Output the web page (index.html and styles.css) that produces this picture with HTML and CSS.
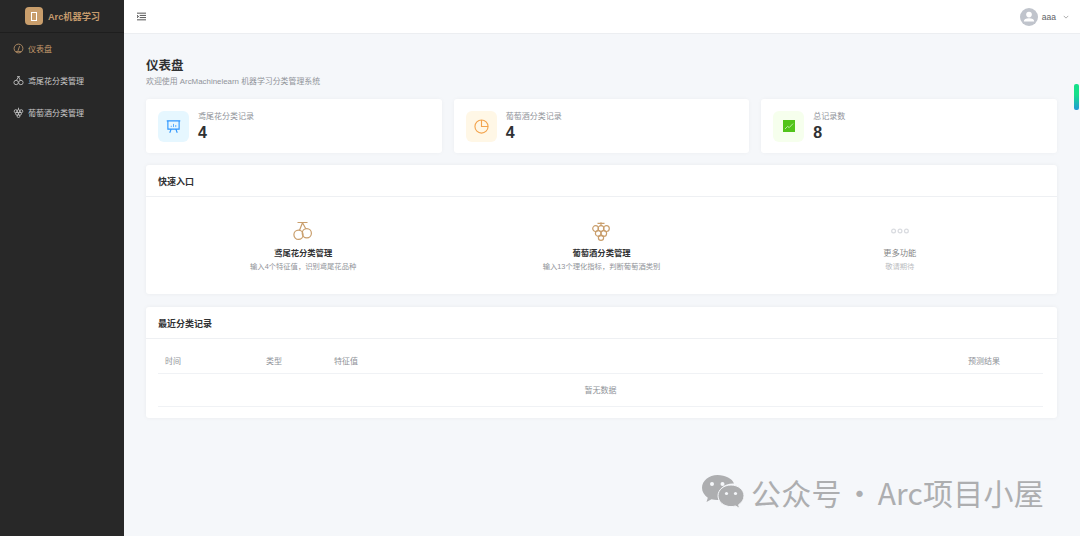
FILE: index.html
```html
<!DOCTYPE html>
<html lang="en">
<head>
    <meta charset="UTF-8">
    <meta name="viewport" content="width=device-width, initial-scale=1.0">
    <title>Arc机器学习</title>
    <link rel="stylesheet" href="styles.css">
</head>
<body>
    <aside class="sidebar">
        <div class="brand">
            <div class="brand-logo"><span class="brand-mark"></span></div>
            <span class="brand-name">Arc机器学习</span>
        </div>
        <nav class="menu">
            <div class="menu-item active">
                <svg class="menu-icon" viewBox="0 0 12 12"><circle cx="6" cy="6" r="4.8"/><path d="M5.4 8.6 7.2 3.4M3 9.400h6"/></svg>
                <span>仪表盘</span>
            </div>
            <div class="menu-item">
                <svg class="menu-icon" viewBox="0 0 12 12"><circle cx="3.4" cy="8.2" r="2.4"/><circle cx="8.6" cy="8.2" r="2.4"/><path d="M3.8 5.8 6 2 8 5.800M4.400 1.800h3.200"/></svg>
                <span>鸢尾花分类管理</span>
            </div>
            <div class="menu-item">
                <svg class="menu-icon" viewBox="0 0 12 12"><circle cx="3" cy="4.600" r="1.700"/><circle cx="6" cy="4.600" r="1.700"/><circle cx="9" cy="4.600" r="1.700"/><circle cx="4.500" cy="7.300" r="1.700"/><circle cx="7.500" cy="7.300" r="1.700"/><circle cx="6" cy="10" r="1.500"/><path d="M6 3V.8"/></svg>
                <span>葡萄酒分类管理</span>
            </div>
        </nav>
    </aside>

    <div class="right">
        <header class="topbar">
            <svg class="fold-icon" viewBox="0 0 10 9"><path d="M0 .8h10M3 3.300h7M3 5.700h7M0 8.200h10M0 3.200v2.600l1.800-1.300z"/></svg>
            <div class="user">
                <div class="avatar">
                    <svg viewBox="0 0 18 18"><circle cx="9" cy="6.600" r="2.800"/><path d="M3.800 13.600c0-2.400 2.200-3.400 5.200-3.400s5.200 1 5.200 3.400z"/></svg>
                </div>
                <span class="user-name">aaa</span>
                <svg class="caret" viewBox="0 0 8 5"><path d="M1 1l3 3 3-3"/></svg>
            </div>
        </header>

        <main class="content">
            <h1 class="page-title">仪表盘</h1>
            <p class="page-sub">欢迎使用 ArcMachinelearn 机器学习分类管理系统</p>

            <section class="stats">
                <div class="stat-card">
                    <div class="stat-icon blue">
                        <svg viewBox="0 0 16 16"><path d="M.8 2h14.400M2 2v8.800h12V2M5.500 10.800 4 14.600M10.500 10.800 12 14.600"/><path class="thin" d="M5.600 8.600V7.200M8 8.600V5.200M10.400 8.600V6.400"/></svg>
                    </div>
                    <div class="stat-text">
                        <div class="stat-label">鸢尾花分类记录</div>
                        <div class="stat-value">4</div>
                    </div>
                </div>
                <div class="stat-card">
                    <div class="stat-icon orange">
                        <svg viewBox="0 0 16 16"><circle cx="8" cy="8" r="7"/><path d="M8 1v7h7"/></svg>
                    </div>
                    <div class="stat-text">
                        <div class="stat-label">葡萄酒分类记录</div>
                        <div class="stat-value">4</div>
                    </div>
                </div>
                <div class="stat-card">
                    <div class="stat-icon green">
                        <svg viewBox="0 0 12 12"><rect width="12" height="12"/><path d="M2 9l2.600-2.600 1.600 1.200L10 3.600"/></svg>
                    </div>
                    <div class="stat-text">
                        <div class="stat-label">总记录数</div>
                        <div class="stat-value">8</div>
                    </div>
                </div>
            </section>

            <section class="panel">
                <h2 class="panel-head">快速入口</h2>
                <div class="quick">
                    <div class="quick-item">
                        <svg class="quick-icon" viewBox="0 0 20 20"><circle cx="5.500" cy="13.800" r="4.600"/><circle cx="13.800" cy="12.200" r="4.600"/><path d="M9.500 1.800 6.500 9.300M9.500 1.800 12.800 7.700M4.500 1.500h10"/></svg>
                        <div class="quick-title">鸢尾花分类管理</div>
                        <div class="quick-desc">输入4个特征值，识别鸢尾花品种</div>
                    </div>
                    <div class="quick-item">
                        <svg class="quick-icon" viewBox="0 0 20 20"><circle cx="4.600" cy="7.600" r="2.900"/><circle cx="10" cy="7.600" r="2.900"/><circle cx="15.400" cy="7.600" r="2.900"/><circle cx="7.300" cy="12.400" r="2.900"/><circle cx="12.700" cy="12.400" r="2.900"/><circle cx="10" cy="16.800" r="2.600"/><path d="M10 4.700V1.200M6.500 2.400h7"/></svg>
                        <div class="quick-title">葡萄酒分类管理</div>
                        <div class="quick-desc">输入13个理化指标，判断葡萄酒类别</div>
                    </div>
                    <div class="quick-item muted">
                        <svg class="quick-icon" viewBox="0 0 20 20"><circle cx="3.600" cy="10" r="1.900"/><circle cx="10" cy="10" r="1.900"/><circle cx="16.400" cy="10" r="1.900"/></svg>
                        <div class="quick-title">更多功能</div>
                        <div class="quick-desc">敬请期待</div>
                    </div>
                </div>
            </section>

            <section class="panel">
                <h2 class="panel-head">最近分类记录</h2>
                <div class="table-wrap">
                    <div class="table-row table-head">
                        <span class="col-time">时间</span>
                        <span class="col-type">类型</span>
                        <span class="col-feat">特征值</span>
                        <span class="col-result">预测结果</span>
                    </div>
                    <div class="table-empty">暂无数据</div>
                </div>
            </section>
        </main>
    </div>

    <div class="scroll-thumb"></div>

    <div class="watermark">
        <svg class="wechat" viewBox="0 0 42 34"><path class="wc-back" d="M15.500 0C7 0 0 5.700 0 12.800c0 4 2.300 7.500 5.800 9.900L4.500 27l5-2.700c1.800.5 3.800.8 5.800.8.500 0 1 0 1.500-.1-.4-1.300-.6-2.600-.6-3.900 0-7 6.400-12.500 14.500-12.500h1.300C30.300 3.500 23.500 0 15.500 0z"/><path class="wc-front" d="M42 20.800C42 14.800 36.200 10 29 10s-13 4.800-13 10.800 5.800 10.800 13 10.800c1.500 0 3-.2 4.400-.6l4.300 2.400-1.100-3.700c3.300-2.100 5.400-5.300 5.400-8.900z"/><circle class="wc-eye" cx="10" cy="9" r="2"/><circle class="wc-eye" cx="20.500" cy="9" r="2"/><circle class="wc-eye" cx="24.500" cy="18.500" r="1.600"/><circle class="wc-eye" cx="33.500" cy="18.500" r="1.600"/></svg>
        <span>公众号 · Arc项目小屋</span>
    </div>
</body>
</html>
```

FILE: styles.css
```css
/* General Styles */
body {
    margin: 0;
    height: 536px;
    overflow: hidden;
    display: flex;
    background-color: #f5f7fa;
    color: #303133;
    font-family: "Liberation Sans", "Noto Sans CJK SC", sans-serif;
}

/* Sidebar */
.sidebar {
    width: 124px;
    flex-shrink: 0;
    background-color: #282828;
}

.brand {
    height: 33px;
    display: flex;
    align-items: center;
    justify-content: center;
    gap: 5px;
    padding-left: 1px;
    border-bottom: 1px solid #1e1e1e;
    box-sizing: border-box;
}

.brand-logo {
    width: 18px;
    height: 18px;
    border-radius: 4px;
    background-color: #c99e6c;
    display: flex;
    align-items: center;
    justify-content: center;
}

.brand-mark {
    width: 4px;
    height: 7px;
    border: 1px solid #fff;
}

.brand-name {
    font-size: 9.200px;
    font-weight: bold;
    color: #c49a6c;
}

.menu {
    display: flex;
    flex-direction: column;
    margin-top: -1px;
}

.menu-item {
    height: 32px;
    display: flex;
    align-items: center;
    gap: 4px;
    padding-left: 13px;
    font-size: 8px;
    color: #c9c9c9;
}

.menu-item.active {
    color: #c49a6c;
}

.menu-icon {
    width: 11px;
    height: 11px;
    fill: none;
    stroke: currentColor;
    stroke-width: 0.9;
}

/* Top bar */
.right {
    flex: 1;
    min-width: 0;
    display: flex;
    flex-direction: column;
}

.topbar {
    height: 34px;
    flex-shrink: 0;
    box-sizing: border-box;
    display: flex;
    align-items: center;
    justify-content: space-between;
    padding: 0 11px 0 13px;
    background-color: #fff;
    border-bottom: 1px solid #eceef1;
}

.fold-icon {
    width: 9px;
    height: 9px;
    fill: none;
    stroke: #444;
    stroke-width: 1;
}

.user {
    display: flex;
    align-items: center;
    gap: 4px;
}

.avatar {
    width: 18px;
    height: 18px;
    border-radius: 50%;
    background-color: #c0c4cc;
}

.avatar svg {
    display: block;
    fill: #fff;
}

.user-name {
    font-size: 8.500px;
    color: #606266;
}

.caret {
    width: 6px;
    height: 4px;
    margin-left: 3px;
    fill: none;
    stroke: #777;
    stroke-width: 0.8;
}

/* Page content */
.content {
    padding: 25px 23px 0 22px;
}

.page-title {
    margin: 0;
    font-size: 12.500px;
    line-height: 15px;
    font-weight: bold;
}

.page-sub {
    margin: 3px 0 0;
    font-size: 7.900px;
    line-height: 10px;
    color: #909399;
}

.stats {
    margin-top: 12px;
    display: grid;
    grid-template-columns: repeat(3, 1fr);
    gap: 12px;
}

.stat-card {
    height: 54px;
    box-sizing: border-box;
    display: flex;
    align-items: center;
    gap: 9px;
    padding: 0 11px 0 12px;
    background-color: #fff;
    border-radius: 3px;
    box-shadow: 0 0 4px rgba(0, 0, 0, 0.04);
}

.stat-icon {
    width: 31px;
    height: 31px;
    border-radius: 6px;
    display: flex;
    align-items: center;
    justify-content: center;
}

.stat-icon svg {
    width: 15px;
    height: 15px;
    fill: none;
    stroke-width: 1.200;
}

.stat-icon .thin {
    stroke-width: 0.8;
}

.stat-icon.blue {
    background-color: #e6f7ff;
    stroke: #2b95ff;
}

.stat-icon.orange {
    background-color: #fff7e6;
    stroke: #f3a44e;
}

.stat-icon.green {
    background-color: #f6ffed;
}

.stat-icon.green svg {
    width: 12px;
    height: 12px;
    stroke: #fff;
    stroke-width: 0.6;
}

.stat-icon.green rect {
    fill: #52c41a;
    stroke: none;
}

.stat-label {
    font-size: 8px;
    line-height: 10px;
    color: #909399;
}

.stat-value {
    margin-top: 2px;
    font-size: 16px;
    line-height: 17px;
    font-weight: bold;
}

/* Panels */
.panel {
    margin-top: 12px;
    background-color: #fff;
    border-radius: 3px;
    box-shadow: 0 0 4px rgba(0, 0, 0, 0.05);
}

.panel + .panel {
    margin-top: 13px;
}

.panel-head {
    margin: 0;
    height: 32px;
    box-sizing: border-box;
    padding: 1px 0 0 12px;
    display: flex;
    align-items: center;
    font-size: 9px;
    font-weight: bold;
    border-bottom: 1px solid #eef0f3;
}

.quick {
    height: 97px;
    display: grid;
    grid-template-columns: repeat(3, 1fr);
    padding: 0 8px;
}

.quick-item {
    display: flex;
    flex-direction: column;
    align-items: center;
    padding-top: 24px;
}

.quick-icon {
    width: 20px;
    height: 20px;
    fill: none;
    stroke: #c99e6c;
    stroke-width: 1.200;
}

.quick-title {
    margin-top: 6px;
    font-size: 8.300px;
    line-height: 12px;
    font-weight: bold;
}

.quick-desc {
    margin-top: 3px;
    font-size: 7.300px;
    line-height: 10px;
    color: #909399;
}

.quick-item.muted {
    opacity: 0.6;
}

.quick-item.muted .quick-icon {
    stroke: #c0c4cc;
}

.quick-item.muted .quick-title {
    font-weight: normal;
}

/* Table */
.table-wrap {
    padding: 11px 14px 11px 12px;
}

.table-row {
    display: flex;
    align-items: center;
    height: 24px;
    box-sizing: border-box;
    padding-bottom: 2px;
    font-size: 8px;
    color: #909399;
    border-bottom: 1px solid #f0f2f5;
}

.col-time {
    width: 108px;
    padding-left: 7px;
    box-sizing: border-box;
}

.col-type {
    width: 68px;
}

.col-feat {
    flex: 1;
}

.col-result {
    width: 75px;
}

.table-empty {
    height: 33px;
    box-sizing: border-box;
    padding-bottom: 2px;
    display: flex;
    align-items: center;
    justify-content: center;
    font-size: 8px;
    color: #909399;
    border-bottom: 1px solid #f0f2f5;
}

/* Overlays */
.scroll-thumb {
    position: absolute;
    left: 1074px;
    top: 84px;
    width: 5px;
    height: 26px;
    border-radius: 2px;
    background: linear-gradient(#16e08a 40%, #2098d8);
}

.watermark {
    position: absolute;
    left: 702px;
    top: 474px;
    display: flex;
    align-items: center;
    gap: 7px;
    font-family: "Noto Sans CJK SC", sans-serif;
    font-size: 30px;
    line-height: 36px;
    letter-spacing: 0.2px;
    word-spacing: -4px;
    color: #adaeb0;
    white-space: nowrap;
}

.wechat {
    width: 42px;
    height: 34px;
}

.wc-back,
.wc-front {
    fill: #adaeb0;
}

.wc-front {
    stroke: #f5f7fa;
    stroke-width: 1;
}

.wc-eye {
    fill: #f5f7fa;
}
```
